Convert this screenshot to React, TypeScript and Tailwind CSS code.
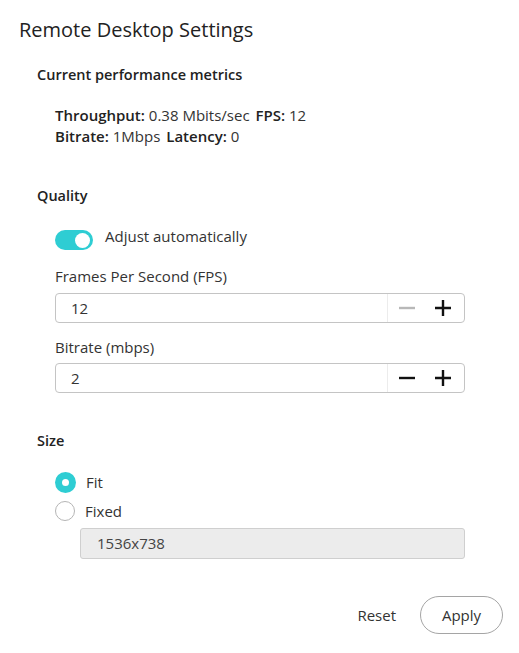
import { useState } from 'react';

function Stepper({ value, minDisabled }: { value: string; minDisabled?: boolean }) {
  return (
    <div className="flex h-[30px] w-[410px] items-stretch rounded-[4px] border border-[#c4c4c4] bg-white">
      <div className="flex flex-1 items-center pl-[15px] text-[15px] text-[#333]">{value}</div>
      <div className="flex w-[77px] items-center border-l border-[#ececec]">
        <button className="flex w-[38px] items-center justify-center">
          <svg width="16" height="16" viewBox="0 0 16 16">
            <path d="M0 8h16" stroke={minDisabled ? '#b8b8b8' : '#111'} strokeWidth="2.4" />
          </svg>
        </button>
        <button className="flex w-[34px] items-center justify-center">
          <svg width="16" height="16" viewBox="0 0 16 16">
            <path d="M0 8h16M8 0v16" stroke="#111" strokeWidth="2.4" />
          </svg>
        </button>
      </div>
    </div>
  );
}

function Radio({ checked, label }: { checked: boolean; label: string }) {
  return (
    <label className="flex h-[20px] items-center">
      {checked ? (
        <span className="flex h-[21px] w-[21px] items-center justify-center rounded-full bg-[#2ecdd3]">
          <span className="h-[7px] w-[7px] rounded-full bg-white" />
        </span>
      ) : (
        <span className="h-[20px] w-[20px] rounded-full border border-[#b5b5b5] bg-white" />
      )}
      <span className="ml-[10px] text-[15px] leading-[20px] text-[#333]">{label}</span>
    </label>
  );
}

export default function App() {
  const [auto, setAuto] = useState(true);

  return (
    <div className="min-h-[653px] w-full bg-white pl-[19px] pr-[16px] pt-[16px] font-['Open_Sans',sans-serif] text-[#333]">
      <h1 className="text-[20px] leading-[28px] text-[#222]">Remote Desktop Settings</h1>

      <div className="pl-[18px]">
        <h2 className="mt-[21px] text-[14.5px] font-semibold leading-[20px] text-[#222]">
          Current performance metrics
        </h2>
        <div className="mt-[20px] pl-[18px] text-[15px] leading-[21px]">
          <p>
            <span className="font-semibold text-[#222]">Throughput:</span> 0.38 Mbits/sec{' '}
            <span className="ml-[2px] font-semibold text-[#222]">FPS:</span> 12
          </p>
          <p>
            <span className="font-semibold text-[#222]">Bitrate:</span> 1Mbps{' '}
            <span className="ml-[2px] font-semibold text-[#222]">Latency:</span> 0
          </p>
        </div>

        <h2 className="mt-[39px] text-[14.5px] font-semibold leading-[20px] text-[#222]">Quality</h2>
        <div className="pl-[18px]">
          <div className="mt-[20px] flex items-start">
            <button
              onClick={() => setAuto(!auto)}
              className={`mt-[4px] flex h-[20px] w-[38px] items-center rounded-full px-[3px] ${auto ? 'justify-end bg-[#2ecdd3]' : 'justify-start bg-[#ccc]'}`}
            >
              <span className="h-[15px] w-[15px] rounded-full bg-white" />
            </button>
            <span className="ml-[12px] text-[15px] leading-[20px]">Adjust automatically</span>
          </div>

          <div className="mt-[16px] text-[15px] leading-[20px]">Frames Per Second (FPS)</div>
          <div className="mt-[7px]">
            <Stepper value="12" minDisabled />
          </div>

          <div className="mt-[14px] text-[15px] leading-[20px]">Bitrate (mbps)</div>
          <div className="mt-[6px]">
            <Stepper value="2" />
          </div>
        </div>

        <h2 className="mt-[38px] text-[14.5px] font-semibold leading-[20px] text-[#222]">Size</h2>
        <div className="pl-[18px]">
          <div className="mt-[21px] flex flex-col gap-[9px]">
            <Radio checked label="Fit" />
            <Radio checked={false} label="Fixed" />
          </div>
          <div className="ml-[25px] mt-[7px] flex h-[31px] w-[385px] items-center rounded-[3px] border border-[#cfcfcf] bg-[#ececec] pl-[16px] text-[15px] text-[#444]">
            1536x738
          </div>
        </div>
      </div>

      <div className="mt-[37px] flex items-center justify-end gap-[24px]">
        <button className="text-[15px] leading-[20px] text-[#333]">Reset</button>
        <button className="h-[38px] w-[83px] rounded-full border border-[#a5a5a5] text-[15px] text-[#333]">
          Apply
        </button>
      </div>
    </div>
  );
}
